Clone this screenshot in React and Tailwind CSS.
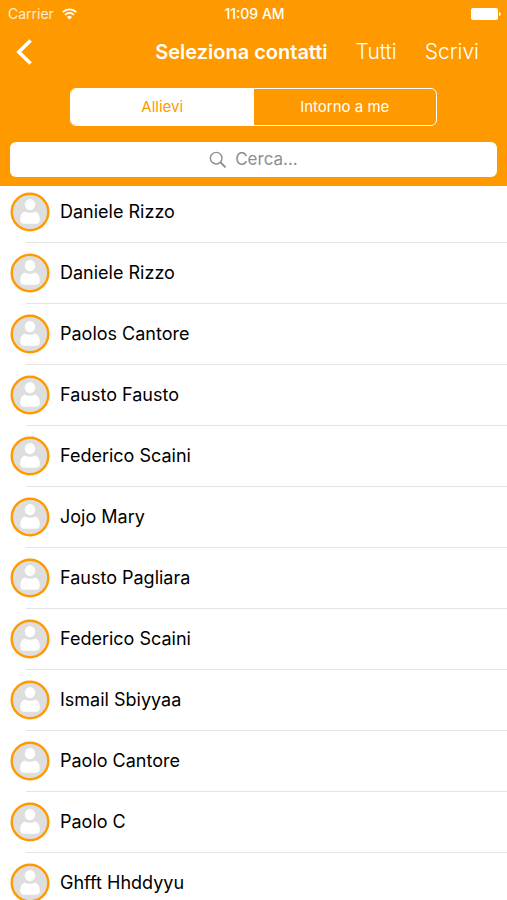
import React, { useState } from "react";

const contacts = [
  "Daniele Rizzo",
  "Daniele Rizzo",
  "Paolos Cantore",
  "Fausto Fausto",
  "Federico Scaini",
  "Jojo Mary",
  "Fausto Pagliara",
  "Federico Scaini",
  "Ismail Sbiyyaa",
  "Paolo Cantore",
  "Paolo C",
  "Ghfft Hhddyyu",
];

const tabs = ["Allievi", "Intorno a me"];

const StatusBar = () => (
  <div className="grid grid-cols-[1fr_auto_1fr] items-center h-7 pl-2 pr-[6px] text-sm leading-4">
    <div className="flex items-center gap-2 text-white/80">
      <span>Carrier</span>
      <svg width="15" height="12" viewBox="0 0 15 12" fill="none" stroke="white" strokeWidth="1.7">
        <path d="M0.7 4.2a9.6 9.6 0 0 1 13.6 0" />
        <path d="M3.1 6.8a6.2 6.2 0 0 1 8.8 0" />
        <path d="M7.5 11.6 5 9a3.6 3.6 0 0 1 5 0z" fill="white" stroke="none" />
      </svg>
    </div>
    <span className="text-center font-medium">11:09 AM</span>
    <svg className="justify-self-end" width="30" height="12" viewBox="0 0 30 12" fill="white">
      <rect x="0" y="0" width="27" height="12" rx="2" />
      <path d="M28 4c1.2 0.4 1.8 1.1 1.8 2s-0.6 1.6-1.8 2z" />
    </svg>
  </div>
);

const Avatar = () => (
  <svg className="shrink-0" width="40" height="40" viewBox="0 0 40 40">
    <circle cx="20" cy="20" r="18.3" fill="#dedede" stroke="#ff9900" strokeWidth="2.4" />
    <ellipse cx="20" cy="12.6" rx="5.2" ry="5.6" fill="white" />
    <path
      d="M15 19.4c1.4 1 3 1.4 5 1.4s3.600-.4 5-1.400c3.200.8 4.800 3.600 4.800 8 0 2.800-1.200 4.400-3.800 4.400h-12c-2.600 0-3.800-1.600-3.800-4.400 0-4.400 1.600-7.200 4.800-8z"
      fill="white"
    />
  </svg>
);

const App = () => {
  const [activeTab, setActiveTab] = useState("Allievi");
  const [search, setSearch] = useState("");

  const visible = contacts.filter((name) =>
    name.toLowerCase().includes(search.toLowerCase())
  );

  return (
    <div className="flex flex-col h-screen bg-white font-['Inter',sans-serif]">
      <header className="shrink-0 bg-[#ff9900] text-white pb-[9px]">
        <StatusBar />

        {/* Navigation */}
        <nav className="flex items-center gap-7 h-12 pl-4 pr-7">
          <button type="button" aria-label="Indietro" className="mr-auto">
            <svg width="17" height="26" viewBox="0 0 17 26" fill="none" stroke="white" strokeWidth="3.6">
              <path d="M14.6 1.5 2.8 13l11.800 11.500" />
            </svg>
          </button>
          <h1 className="text-xl font-semibold">Seleziona contatti</h1>
          <button type="button" className="text-[21px] font-light">Tutti</button>
          <button type="button" className="text-[21px] font-light">Scrivi</button>
        </nav>

        {/* Tabs */}
        <div className="grid grid-cols-2 h-[38px] mt-3 mx-[70px] border border-white rounded-md overflow-hidden">
          {tabs.map((tab) => (
            <button
              key={tab}
              type="button"
              onClick={() => setActiveTab(tab)}
              className={
                activeTab === tab
                  ? "bg-white text-[#ff9900] text-[15px]"
                  : "text-white text-[15px]"
              }
            >
              {tab}
            </button>
          ))}
        </div>

        {/* Search */}
        <label className="flex items-center justify-center gap-2 h-[35px] mt-4 mx-[10px] rounded-md bg-white text-[#8e8e93]">
          <svg width="18" height="18" viewBox="0 0 18 18" fill="none" stroke="currentColor" strokeWidth="1.4">
            <circle cx="7.2" cy="7.2" r="5.8" />
            <path d="M11.4 11.4l5.200 5" strokeWidth="2" />
          </svg>
          <input
            type="text"
            aria-label="Cerca"
            placeholder="Cerca..."
            value={search}
            onChange={(e) => setSearch(e.target.value)}
            className="field-sizing-content text-[17px] outline-none placeholder:text-[#8e8e93]"
          />
        </label>
      </header>

      {/* Contacts */}
      <main className="flex-1 min-h-0 overflow-y-auto [scrollbar-width:none]">
        <ul className="-mt-1">
          {visible.map((name, index) => (
            <li key={index} className="pl-[10px]">
              <div className="flex items-center gap-[10px] h-[60px]">
                <Avatar />
                <span className="text-lg text-black">{name}</span>
              </div>
              <div className="h-px ml-4 bg-[#e4e4e6]" />
            </li>
          ))}
        </ul>
      </main>
    </div>
  );
};

export default App;
